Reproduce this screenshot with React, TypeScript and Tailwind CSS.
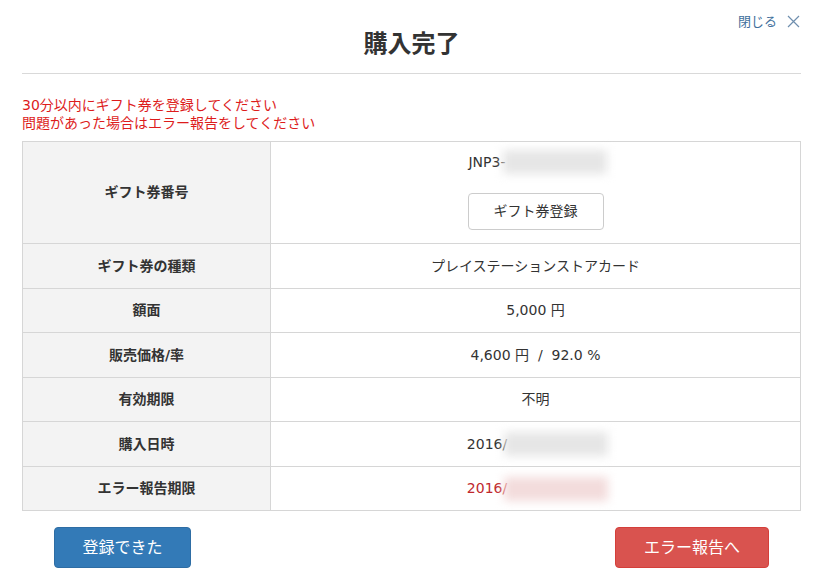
import React from "react";

const font = { fontFamily: '"DejaVu Sans", "Noto Sans CJK JP", sans-serif' };

function Blur({ tint = "gray" }: { tint?: "gray" | "pink" }) {
  return (
    <span className="relative inline-block w-[96px] h-[16px] align-middle ml-[1px]">
      <span
        className={
          "absolute -inset-[4px] blur-[5px] " +
          (tint === "pink" ? "bg-[#f3dcdc]" : "bg-[#e6e6e6]")
        }
      />
    </span>
  );
}

function Row({
  label,
  children,
  h,
  top = false,
}: {
  label: string;
  children: React.ReactNode;
  h: string;
  top?: boolean;
}) {
  return (
    <div className="grid grid-cols-[248px_1fr] border-b border-[#d6d6d6] last:border-b-0">
      <div
        className={
          "bg-[#f3f3f3] border-r border-[#d6d6d6] flex items-center justify-center font-bold text-[14px] text-[#333] " +
          h
        }
      >
        {label}
      </div>
      <div
        className={
          "flex flex-col items-center text-[14px] text-[#333] " +
          (top ? "justify-start pt-[10px]" : "justify-center")
        }
      >
        {children}
      </div>
    </div>
  );
}

export default function App() {
  return (
    <div className="relative w-[817px] h-[587px] bg-white" style={font}>
      <div className="absolute top-[12px] right-[17px] flex items-center gap-[10px] text-[#3f6f9c] text-[13px]">
        <span>閉じる</span>
        <svg width="13" height="13" viewBox="0 0 13 13">
          <path d="M1 1L12 12M12 1L1 12" stroke="#6f8fae" strokeWidth="1.2" fill="none" />
        </svg>
      </div>
      <div className="pl-[22px] pr-[16px]">
        <div className="h-[74px] border-b border-[#d9d9d9] flex items-end justify-center pb-[13px]">
          <h1 className="text-[24px] leading-[32px] font-bold text-[#333]">購入完了</h1>
        </div>
        <div className="mt-[22px] text-[14px] leading-[18px] text-[#dd1c1c]">
          <p>30分以内にギフト券を登録してください</p>
          <p>問題があった場合はエラー報告をしてください</p>
        </div>
        <div className="mt-[9px] border border-[#d6d6d6]">
          <Row label="ギフト券番号" h="h-[101px]" top>
            <div className="flex items-center h-[20px]">
              <span>JNP3-</span>
              <Blur />
            </div>
            <button className="mt-[21px] w-[136px] h-[37px] border border-[#cccccc] rounded-[4px] bg-white text-[14px] text-[#333]">
              ギフト券登録
            </button>
          </Row>
          <Row label="ギフト券の種類" h="h-[44px]">
            <span>プレイステーションストアカード</span>
          </Row>
          <Row label="額面" h="h-[43px]">
            <span>5,000 円</span>
          </Row>
          <Row label="販売価格/率" h="h-[44px]">
            <span className="whitespace-pre">4,600 円  /  92.0 %</span>
          </Row>
          <Row label="有効期限" h="h-[43px]">
            <span>不明</span>
          </Row>
          <Row label="購入日時" h="h-[44px]">
            <div className="flex items-center">
              <span>2016/</span>
              <Blur />
            </div>
          </Row>
          <Row label="エラー報告期限" h="h-[43px]">
            <div className="flex items-center text-[#c0282d]">
              <span>2016/</span>
              <Blur tint="pink" />
            </div>
          </Row>
        </div>
        <div className="mt-[16px] flex justify-between pl-[32px] pr-[32px]">
          <button className="w-[137px] h-[41px] rounded-[4px] bg-[#337ab7] border border-[#2e6da4] text-white text-[16px]">
            登録できた
          </button>
          <button className="w-[154px] h-[41px] rounded-[4px] bg-[#d9534f] border border-[#d43f3a] text-white text-[16px]">
            エラー報告へ
          </button>
        </div>
      </div>
    </div>
  );
}
